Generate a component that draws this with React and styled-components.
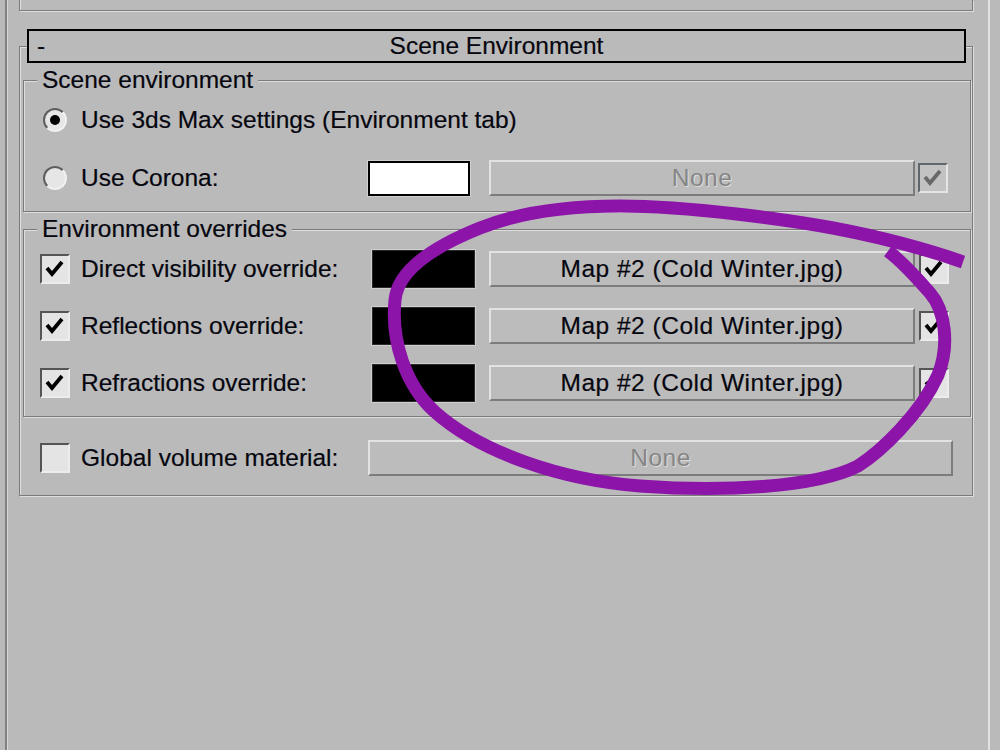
import styled, { createGlobalStyle } from "styled-components";

const GlobalStyle = createGlobalStyle`
  html, body {
    margin: 0;
    padding: 0;
    background: #bababa;
  }
  body {
    font-family: "Liberation Sans", Arial, sans-serif;
    font-size: 24.5px;
    color: #06060f;
    -webkit-text-stroke: 0.2px currentColor;
  }
`;

const DARK = "#7b7b7b";
const LIGHT = "#dedede";

const Page = styled.div`
  position: relative;
  width: 1000px;
  height: 750px;
  overflow: hidden;
  background: #bababa;
`;

const Panel = styled.div`
  box-sizing: border-box;
  margin-left: 5px;
  width: 985px;
  height: 750px;
  border-left: 2px solid #808080;
  border-right: 2px solid #e2e2e2;
  box-shadow: inset 1px 0 0 #d8d8d8;
  padding-left: 12px;
`;

const PrevRollout = styled.div`
  box-sizing: border-box;
  width: 954px;
  height: 11px;
  border: 1px solid ${DARK};
  border-top: none;
  box-shadow: inset 1px 0 0 ${LIGHT}, 1px 1px 0 ${LIGHT};
`;

const Rollout = styled.div`
  box-sizing: border-box;
  width: 954px;
  margin-top: 35px;
  border: 1px solid ${DARK};
  box-shadow: inset 1px 1px 0 ${LIGHT}, 1px 1px 0 ${LIGHT};
  padding: 0 1px 19px 3px;
`;

const TitleBar = styled.div`
  box-sizing: border-box;
  height: 34px;
  margin: -18px 5px 0 4px;
  border: 2px solid #000;
  background: #bababa;
  display: grid;
  grid-template-columns: 1fr auto 1fr;
  align-items: center;
  line-height: 1;
`;

const Minus = styled.span`
  padding-left: 8px;
`;

const Title = styled.span`
  white-space: nowrap;
`;

const Group = styled.fieldset`
  box-sizing: border-box;
  width: 948px;
  margin: ${(p) => p.$mt}px 0 0 0;
  padding: ${(p) => p.$pt}px 0 ${(p) => p.$pb}px 0;
  border: 1px solid ${DARK};
  box-shadow: inset 1px 1px 0 ${LIGHT}, 1px 1px 0 ${LIGHT};
  min-width: 0;
`;

const Legend = styled.legend`
  margin-left: 13px;
  padding: 0 5px;
  line-height: 28px;
  background: #bababa;
  white-space: nowrap;
`;

const RowList = styled.div`
  display: flex;
  flex-direction: column;
  gap: ${(p) => p.$gap}px;
`;

const Row = styled.div`
  display: flex;
  align-items: center;
  height: ${(p) => p.$h}px;
  padding-left: ${(p) => p.$pl}px;
  margin-top: ${(p) => p.$mt || 0}px;
`;

const ToggleCell = styled.div`
  flex: 0 0 30px;
  height: 30px;
  margin-right: 11px;
  display: flex;
  align-items: center;
  justify-content: center;
`;

const RadioCircle = styled.div`
  box-sizing: border-box;
  width: 24px;
  height: 24px;
  border-radius: 50%;
  background: #e6e6e6;
  border: 2px solid;
  border-color: #5e5e5e #f0f0f0 #f0f0f0 #5e5e5e;
  display: flex;
  align-items: center;
  justify-content: center;

  &::after {
    content: "";
    display: ${(p) => (p.$checked ? "block" : "none")};
    width: 10px;
    height: 10px;
    border-radius: 50%;
    background: #000;
  }
`;

const Box = styled.div`
  box-sizing: border-box;
  flex: 0 0 30px;
  width: 30px;
  height: 30px;
  margin-left: ${(p) => p.$ml || 0}px;
  border: 2px solid;
  border-color: ${(p) =>
    p.$disabled ? "#5d676d #e4e4e4 #e4e4e4 #5d676d" : "#555 #ececec #ececec #555"};
  background: ${(p) => (p.$disabled ? "#c2c2c2" : "#e4e4e4")};
  display: flex;
  align-items: center;
  justify-content: center;
`;

const Label = styled.div`
  flex: 0 0 ${(p) => p.$w}px;
  white-space: nowrap;
  line-height: 1;
`;

const Swatch = styled.div`
  box-sizing: border-box;
  flex: 0 0 ${(p) => p.$w}px;
  height: ${(p) => p.$h}px;
  background: ${(p) => p.$color};
  border: ${(p) => (p.$color === "#fff" ? "2px solid #000" : "1px solid #2a2a2a")};
  box-shadow: 0 0 0 1px #cfcfcf;
`;

const MapButton = styled.div`
  box-sizing: border-box;
  flex: 0 0 ${(p) => p.$w}px;
  height: 36px;
  margin-left: ${(p) => p.$ml || 0}px;
  border: 2px solid;
  border-color: #e2e2e2 #7c7c7c #7c7c7c #e2e2e2;
  background: #bcbcbc;
  display: flex;
  align-items: center;
  justify-content: center;
  white-space: nowrap;
  line-height: 1;
  letter-spacing: 0.5px;
  color: ${(p) => (p.$disabled ? "#858585" : "#06060f")};
  -webkit-text-stroke: ${(p) => (p.$disabled ? "0" : "0.2px currentColor")};
  text-shadow: ${(p) => (p.$disabled ? "1px 1px 0 #dcdcdc" : "none")};
`;

const Overlay = styled.svg`
  position: absolute;
  left: 0;
  top: 0;
  pointer-events: none;
`;

const Check = ({ color = "#000" }) => (
  <svg width="22" height="22" viewBox="0 0 22 22">
    <polyline
      points="3,10 8,16 18,4"
      fill="none"
      stroke={color}
      strokeWidth="3.8"
      strokeLinejoin="miter"
    />
  </svg>
);

const CheckBox = ({ checked, disabled, ml }) => (
  <Box $disabled={disabled} $ml={ml}>
    {checked && <Check color={disabled ? "#686868" : "#000"} />}
  </Box>
);

const overrides = [
  "Direct visibility override:",
  "Reflections override:",
  "Refractions override:",
];

export default function App() {
  return (
    <Page>
      <GlobalStyle />
      <Panel>
        <PrevRollout />
        <Rollout>
          <TitleBar>
            <Minus>-</Minus>
            <Title>Scene Environment</Title>
            <span />
          </TitleBar>

          <Group $mt={3} $pt={8} $pb={15}>
            <Legend>Scene environment</Legend>
            <RowList $gap={22}>
              <Row $h={36} $pl={16}>
                <ToggleCell>
                  <RadioCircle $checked />
                </ToggleCell>
                <Label $w={440}>Use 3ds Max settings (Environment tab)</Label>
              </Row>
              <Row $h={36} $pl={16}>
                <ToggleCell>
                  <RadioCircle />
                </ToggleCell>
                <Label $w={287}>Use Corona:</Label>
                <Swatch $w={102} $h={35} $color="#fff" />
                <MapButton $w={426} $ml={19} $disabled>
                  None
                </MapButton>
                <CheckBox checked disabled ml={3} />
              </Row>
            </RowList>
          </Group>

          <Group $mt={3} $pt={7} $pb={14}>
            <Legend>Environment overrides</Legend>
            <RowList $gap={19}>
              {overrides.map((label) => (
                <Row key={label} $h={38} $pl={16}>
                  <ToggleCell>
                    <CheckBox checked />
                  </ToggleCell>
                  <Label $w={291}>{label}</Label>
                  <Swatch $w={103} $h={38} $color="#000" />
                  <MapButton $w={426} $ml={14}>
                    Map #2 (Cold Winter.jpg)
                  </MapButton>
                  <CheckBox checked ml={4} />
                </Row>
              ))}
            </RowList>
          </Group>

          <Row $h={36} $pl={17} $mt={23}>
            <ToggleCell>
              <CheckBox />
            </ToggleCell>
            <Label $w={287}>Global volume material:</Label>
            <MapButton $w={585} $disabled>
              None
            </MapButton>
          </Row>
        </Rollout>
      </Panel>

      {/* hand-drawn annotation over the panel */}
      <Overlay width="1000" height="750" viewBox="0 0 1000 750">
        <path
          d="M 963 262
             C 920 247, 870 235, 833 228
             C 790 220, 690 206, 620 206
             C 570 206, 520 212, 480 228
             C 440 244, 398 268, 395 300
             C 391 340, 405 385, 435 412
             C 480 452, 560 480, 640 486
             C 720 492, 815 488, 858 466
             C 880 452, 920 415, 938 375
             C 950 345, 945 310, 930 293
             C 910 270, 900 260, 888 251"
          fill="none"
          stroke="#8c14a9"
          strokeWidth="13"
          strokeLinecap="butt"
          strokeLinejoin="round"
        />
      </Overlay>
    </Page>
  );
}
